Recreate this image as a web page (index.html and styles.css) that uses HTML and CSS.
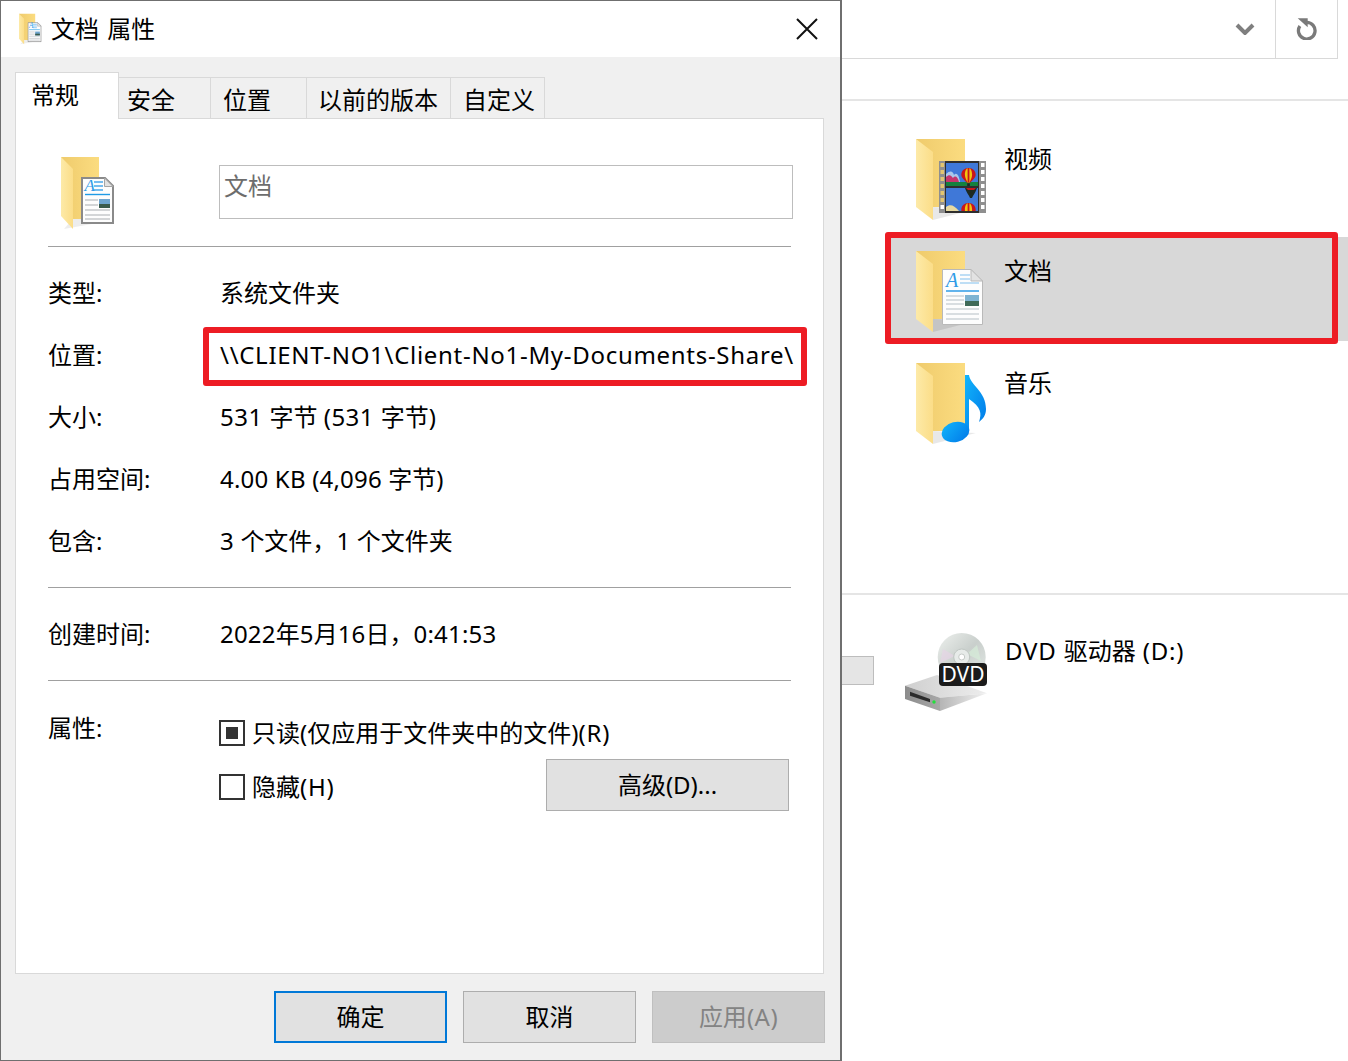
FILE: index.html
```html
<!DOCTYPE html>
<html lang="zh-CN">
<head>
<meta charset="utf-8">
<title>文档 属性</title>
<link rel="stylesheet" href="styles.css">
</head>
<body>
<svg class="defs" width="0" height="0" aria-hidden="true">
  <defs>
    <linearGradient id="flap" x1="0" x2="1" y1="0" y2="0"><stop offset="0" stop-color="#fdeaa8"/><stop offset="1" stop-color="#fbdd88"/></linearGradient>
    <linearGradient id="back" x1="0" x2="1" y1="0" y2="0"><stop offset="0" stop-color="#efcb6c"/><stop offset="1" stop-color="#fbdc80"/></linearGradient>
    <linearGradient id="note" x1="0" x2="1" y1="0" y2="1"><stop offset="0" stop-color="#12b5fb"/><stop offset="1" stop-color="#0078e8"/></linearGradient>
    <linearGradient id="disc" x1="0" x2="1" y1="0" y2="1"><stop offset="0" stop-color="#eef1ee"/><stop offset=".5" stop-color="#c9cfcc"/><stop offset="1" stop-color="#e4e9e6"/></linearGradient>
    <linearGradient id="driveTop" x1="0" x2="1" y1="0" y2="0"><stop offset="0" stop-color="#cfcfcf"/><stop offset="1" stop-color="#ededed"/></linearGradient>
    <linearGradient id="driveSide" x1="0" x2="1" y1="0" y2="0"><stop offset="0" stop-color="#b5b5b5"/><stop offset="1" stop-color="#f2f2f2"/></linearGradient>
    <linearGradient id="driveFront" x1="0" x2="1" y1="0" y2="0"><stop offset="0" stop-color="#8c8c8c"/><stop offset="1" stop-color="#a8a8a8"/></linearGradient>
    <clipPath id="frameBottom"><rect x="30" y="49" width="32" height="23"/></clipPath>
    <symbol id="folder" viewBox="0 0 70 82">
      <path d="M17 81L60 70L17 68Z" fill="#000" opacity=".09"/>
      <path d="M0 0H49V68H17Z" fill="url(#back)"/>
      <path d="M0 0L17 13V81L0 68Z" fill="url(#flap)"/>
    </symbol>
    <symbol id="doc" viewBox="0 0 41 56">
      <path d="M.5 .5H29L40.5 12V55.5H.5Z" fill="#fdfdfd" stroke="#b9b9b9"/>
      <path d="M29 .5V12H40.5Z" fill="#e2e2e2" stroke="#b9b9b9"/>
      <text class="doc-a" x="4" y="18">A</text>
      <path d="M18 6H28M18 10H28M18 14H37" stroke="#a9d3f2" stroke-width="1.5"/>
      <path d="M4 22H37" stroke="#2f9be6" stroke-width="1.5"/>
      <path d="M4 27H22M4 31H22M4 35H22M4 40H37M4 45H37M4 50H37" stroke="#cdd3d8" stroke-width="1.5"/>
      <rect x="23" y="26" width="14" height="11" fill="#7fb4d2"/>
      <rect x="23" y="32" width="14" height="5" fill="#3f6a58"/>
    </symbol>
    <symbol id="doc-small" viewBox="0 0 33 47">
      <path d="M1 1H24L32 9V46H1Z" fill="#fdfdfd" stroke="#8a8a8a" stroke-width="2"/>
      <path d="M23.5 1V9.5H32Z" fill="#e2e2e2" stroke="#a5a5a5"/>
      <text class="doc-a-small" x="3.5" y="14">A</text>
      <path d="M13 5H22M13 9H22M13 13H22" stroke="#4aa8ea" stroke-width="1.4"/>
      <path d="M4 17.5H29" stroke="#1f9be6" stroke-width="1.4"/>
      <path d="M4 23H17M4 28H17M4 33H29M4 38H29M4 42H29" stroke="#a9adb1" stroke-width="1.2"/>
      <rect x="18" y="22" width="11" height="9" fill="#6ea5cf"/>
      <rect x="18" y="27" width="11" height="4" fill="#3a5b4c"/>
    </symbol>
    <symbol id="balloon" viewBox="0 0 16 20">
      <path d="M8 0C13 0 16 3.5 16 7.5C16 11 12 14 10 16H6C4 14 0 11 0 7.5C0 3.5 3 0 8 0Z" fill="#c9161c"/>
      <path d="M8 0C10.5 0 12 3.5 12 7.5C12 11 10 14 9 16H7C6 14 4 11 4 7.5C4 3.5 5.500 0 8 0Z" fill="#f2c40f"/>
      <path d="M8 0V16" stroke="#c9161c" stroke-width="2"/>
      <rect x="6.500" y="17" width="3" height="3" fill="#222"/>
    </symbol>
    <symbol id="title-doc-folder" viewBox="0 0 54 74">
      <path d="M3 73L42 66L14 60Z" fill="#000" opacity=".07"/>
      <path d="M0 1H38V63H12Z" fill="url(#back)"/>
      <path d="M0 1L12 13V73L0 60Z" fill="url(#flap)"/>
      <use href="#doc-small" x="20" y="21" width="33" height="47"/>
    </symbol>
  </defs>
</svg>

<section class="dialog">
  <header class="titlebar">
    <svg class="title-icon"><use href="#title-doc-folder"/></svg>
    <h1 class="title">文档 属性</h1>
    <svg class="close" viewBox="0 0 22 22"><path d="M1 1L21 21M21 1L1 21" stroke="#111" stroke-width="2"/></svg>
  </header>

  <nav class="tabs">
    <div class="tab active w-general">常规</div>
    <div class="tab w-security">安全</div>
    <div class="tab w-location">位置</div>
    <div class="tab w-previous">以前的版本</div>
    <div class="tab w-custom">自定义</div>
  </nav>

  <main class="panel">
    <div class="head">
      <svg class="head-icon"><use href="#title-doc-folder"/></svg>
      <div class="name-field">文档</div>
    </div>
    <hr class="sep">
    <div class="rows">
      <div class="row"><span class="label">类型:</span><span>系统文件夹</span></div>
      <div class="row"><span class="label">位置:</span><span class="path">\\CLIENT-NO1\Client-No1-My-Documents-Share\</span><span class="mark mark-path"></span></div>
      <div class="row"><span class="label">大小:</span><span><span class="lat-mid">531 </span>字节 <span class="lat-mid">(531 </span>字节<span class="lat-mid">)</span></span></div>
      <div class="row"><span class="label">占用空间:</span><span><span class="lat">4.00 KB (4,096 </span>字节<span class="lat">)</span></span></div>
      <div class="row"><span class="label">包含:</span><span><span class="lat">3 </span>个文件，<span class="lat">1 </span>个文件夹</span></div>
    </div>
    <hr class="sep">
    <div class="rows">
      <div class="row"><span class="label">创建时间:</span><span><span class="lat">2022</span>年<span class="lat">5</span>月<span class="lat">16</span>日，<span class="lat">0:41:53</span></span></div>
    </div>
    <hr class="sep">
    <div class="attrs">
      <span class="label attr-label">属性:</span>
      <div class="attr-list">
        <div class="attr"><span class="check mixed"></span><span>只读(仅应用于文件夹中的文件)<span class="lat-wide">(R)</span></span></div>
        <div class="attr attr-second">
          <div class="attr-left"><span class="check"></span><span>隐藏<span class="lat-wide">(H)</span></span></div>
          <div class="btn btn-adv">高级(D)...</div>
        </div>
      </div>
    </div>
  </main>

  <footer class="actions">
    <div class="btn btn-foot primary">确定</div>
    <div class="btn btn-foot">取消</div>
    <div class="btn btn-foot disabled">应用<span class="lat-mid">(A)</span></div>
  </footer>
</section>

<section class="explorer">
  <div class="addr">
    <div class="addr-field">
      <svg class="chev" viewBox="0 0 20 12"><path d="M2 2L10 10L18 2" fill="none" stroke="#7f7f7f" stroke-width="4"/></svg>
    </div>
    <div class="addr-refresh">
      <svg class="refresh" viewBox="0 0 22 22"><path d="M10.700 4.400A8.300 8.300 0 1 1 3.900 8" fill="none" stroke="#7a7a7a" stroke-width="3.300"/><path d="M1.700 .3H11.700V9.300Z" fill="#7a7a7a"/></svg>
    </div>
  </div>
  <div class="strip"></div>

  <div class="items">
    <div class="item">
      <svg class="big-icon" viewBox="0 0 70 82">
        <use href="#folder" width="70" height="82"/>
        <rect x="23" y="22" width="47" height="52" fill="#8f8f8f"/>
        <rect x="24.500" y="24" width="3.500" height="4" fill="#e3c56f"/><rect x="24.500" y="31" width="3.500" height="4" fill="#e3c56f"/><rect x="24.500" y="38" width="3.500" height="4" fill="#e3c56f"/><rect x="24.500" y="45" width="3.500" height="4" fill="#e3c56f"/><rect x="24.500" y="52" width="3.500" height="4" fill="#e3c56f"/><rect x="24.500" y="59" width="3.500" height="4" fill="#e3c56f"/><rect x="24.500" y="66" width="3.500" height="4" fill="#fff"/>
        <rect x="65" y="24" width="3.500" height="4" fill="#fff"/><rect x="65" y="31" width="3.500" height="4" fill="#fff"/><rect x="65" y="38" width="3.500" height="4" fill="#fff"/><rect x="65" y="45" width="3.500" height="4" fill="#fff"/><rect x="65" y="52" width="3.500" height="4" fill="#fff"/><rect x="65" y="59" width="3.500" height="4" fill="#fff"/><rect x="65" y="66" width="3.500" height="4" fill="#fff"/>
        <rect x="29" y="22" width="34" height="52" fill="#2e2e2e"/>
        <rect x="30" y="24" width="32" height="23" fill="#3f78d8"/>
        <rect x="30" y="43" width="32" height="4" fill="#14803e"/>
        <path d="M30 43V35C34 31 37 32 38 36C40 33 43 35 44 43Z" fill="#a9c7ea"/>
        <path d="M30 43V38C33 35 35 36 37 39C39 36 42 38 43 43Z" fill="#c4356d"/>
        <use href="#balloon" x="45" y="29" width="15" height="18"/>
        <rect x="30" y="49" width="32" height="23" fill="#3f78d8"/>
        <path d="M49 49H61C60 53 57 56 56 59H54C53 56 50 53 49 49Z" fill="#1d2a22"/>
        <path d="M50 49H60L58 51H52Z" fill="#c9161c"/>
        <path d="M30 72V68C34 65 38 66 43 72Z" fill="#e7d9a0"/>
        <g clip-path="url(#frameBottom)"><use href="#balloon" x="45" y="64" width="15" height="18"/></g>
      </svg>
      <span class="item-name">视频</span>
    </div>
    <div class="item selected">
      <svg class="big-icon" viewBox="0 0 70 82">
        <use href="#folder" width="70" height="82"/>
        <use href="#doc" x="26" y="18" width="41" height="56"/>
      </svg>
      <span class="item-name">文档</span>
      <span class="mark mark-item"></span>
    </div>
    <div class="item">
      <svg class="big-icon" viewBox="0 0 70 82">
        <use href="#folder" width="70" height="82"/>
        <path d="M49 12H53C54 22 70 28 70 46C70 52 67 56 63 59C66 50 65 44 53 36V68H49Z" fill="url(#note)"/>
        <ellipse cx="39.500" cy="69" rx="14" ry="10" transform="rotate(-14 39.500 69)" fill="url(#note)"/>
      </svg>
      <span class="item-name">音乐</span>
    </div>
  </div>

  <div class="group-sep"></div>

  <div class="drive-row">
    <span class="stub"></span>
    <svg class="dvd-icon" viewBox="0 0 85 80">
      <circle cx="56.700" cy="24" r="24" fill="url(#disc)"/>
      <path d="M38 16L50 23L35 30Z" fill="#e6d4e6" opacity=".7"/>
      <path d="M72 12L62 21L76 28Z" fill="#d6ecd9" opacity=".7"/>
      <circle cx="56.700" cy="24" r="8" fill="#e7ebe9" stroke="#bfc6c2"/>
      <circle cx="56.700" cy="24" r="3" fill="#fff" stroke="#c5cac7"/>
      <path d="M0 52.700L32 42L82 60.300L35 64.700Z" fill="url(#driveTop)"/>
      <path d="M35 64.700L82 60.300L35 78Z" fill="url(#driveSide)"/>
      <path d="M0 52.700L35 64.700V78L0 66Z" fill="url(#driveFront)"/>
      <path d="M5 58.700L25 66V69.300L5 62.700Z" fill="#2b2b2b"/>
      <circle cx="29" cy="69" r="1.700" fill="#20e03a"/>
      <rect x="34" y="30" width="48" height="23" rx="4" fill="#1b1b1b"/>
      <text class="dvd-text" x="58" y="49">DVD</text>
    </svg>
    <span class="drive-name"><span class="lat-wide">DVD </span>驱动器<span class="lat-wide"> (D:)</span></span>
  </div>
</section>
</body>
</html>
```

FILE: styles.css
```css
* { box-sizing: border-box; }
html, body { margin: 0; height: 100%; }
body {
  display: flex;
  width: 1348px;
  height: 1061px;
  overflow: hidden;
  background: #fff;
  color: #000;
  font-family: "Noto Sans", "Noto Sans CJK SC", sans-serif;
  font-size: 24px;
  line-height: 32px;
}
.defs { position: absolute; }
.lat { letter-spacing: .2px; }
.lat-mid { letter-spacing: .5px; }
.lat-wide { letter-spacing: .8px; }
.path { letter-spacing: .7px; white-space: nowrap; }

/* dialog */
.dialog {
  flex: 0 0 842px;
  height: 1061px;
  display: flex;
  flex-direction: column;
  background: #f0f0f0;
  border: 1px solid #6f6f6f;
  border-right-width: 2px;
}
.titlebar {
  flex: 0 0 56px;
  display: flex;
  align-items: center;
  background: #fff;
  padding: 0 22px 0 18px;
}
.title-icon { width: 23px; height: 32px; margin-right: 9px; }
.title { flex: 1; margin: 0; font-size: 24px; font-weight: 400; word-spacing: 2px; }
.close { width: 22px; height: 22px; }

.tabs {
  display: flex;
  align-items: flex-end;
  height: 61px;
  padding-left: 14px;
}
.tab {
  height: 41px;
  background: #f0f0f0;
  border: 1px solid #d9d9d9;
  border-left: 0;
  border-bottom: 0;
  padding: 6px 0 0 12px;
}
.tab.active {
  height: 47px;
  background: #fff;
  border-left: 1px solid #d9d9d9;
  padding: 6px 0 0 15px;
  margin-bottom: -1px;
  position: relative;
  z-index: 1;
}
.w-general { width: 104px; }
.w-security { width: 92px; padding-left: 8px; }
.w-location { width: 96px; }
.w-previous { width: 144px; padding-left: 11px; }
.w-custom { width: 94px; }

.panel {
  width: 809px;
  height: 856px;
  margin-left: 14px;
  background: #fff;
  border: 1px solid #d9d9d9;
  padding: 38px 32px 0;
}
.head { display: flex; height: 74px; }
.head-icon { flex: none; width: 54px; height: 74px; margin: -1px 0 0 13px; }
.name-field {
  width: 574px;
  height: 54px;
  margin: 8px 0 0 104px;
  border: 1px solid #bdbdbd;
  padding: 4px 4px;
  color: #6d6d6d;
  flex: none;
}
.sep {
  width: 743px;
  height: 1px;
  margin: 15px 0;
  border: 0;
  background: #a0a0a0;
}
.rows { display: flex; flex-direction: column; }
.row { position: relative; display: flex; align-items: center; height: 62px; }
.label { flex: 0 0 172px; }

.mark { position: absolute; border: 6px solid #ed1c24; border-radius: 3px; pointer-events: none; }
.mark-path { left: 155px; right: -16px; top: 3px; height: 59px; }
.mark-item { left: -2px; right: 10px; top: -5px; bottom: -3px; }

.attrs { display: flex; }
.attr-label { padding-top: 16px; line-height: 32px; }
.attr-list { flex: 1; margin: 0 2px 0 -1px; padding-top: 10px; }
.attr { display: flex; align-items: center; height: 54px; }
.attr-second { justify-content: space-between; }
.attr-left { display: flex; align-items: center; }
.check {
  width: 26px;
  height: 26px;
  margin-right: 7px;
  border: 2px solid #333;
  background: #fff;
  display: flex;
  align-items: center;
  justify-content: center;
}
.mixed::after { content: ""; width: 12px; height: 12px; background: #333; }

.btn {
  display: flex;
  align-items: center;
  justify-content: center;
  background: #e1e1e1;
  border: 1px solid #adadad;
}
.btn-adv { width: 243px; height: 52px; margin-bottom: 4px; }
.actions {
  display: flex;
  gap: 16px;
  justify-content: flex-end;
  padding: 17px 15px 0 0;
}
.btn-foot { width: 173px; height: 52px; }
.primary { border: 2px solid #0078d7; }
.disabled { background: #cccccc; border-color: #bfbfbf; color: #838383; }

/* explorer */
.explorer { flex: 1; min-width: 0; display: flex; flex-direction: column; background: #fff; }
.addr { display: flex; height: 59px; width: 496px; flex: none; }
.addr-field {
  flex: 1;
  border-bottom: 1px solid #d9d9d9;
  display: flex;
  align-items: center;
  justify-content: flex-end;
  padding-right: 20px;
}
.chev { width: 20px; height: 12px; }
.addr-refresh {
  flex: 0 0 63px;
  border: 1px solid #d9d9d9;
  border-top: 0;
  display: flex;
  align-items: center;
  justify-content: center;
}
.refresh { width: 22px; height: 22px; }
.strip { flex: 0 0 42px; border-bottom: 2px solid #e5e5e5; }
.items { flex: 0 0 492px; display: flex; flex-direction: column; gap: 8px; padding-top: 24px; }
.item {
  position: relative;
  display: flex;
  margin-left: 45px;
  height: 104px;
  padding: 14px 0 0 29px;
}
.selected { background: #d8d8d8; }
.big-icon { width: 70px; height: 82px; flex: none; }
.item-name { margin: 4px 0 0 18px; }
.group-sep { flex: 0 0 2px; background: #e5e5e5; }
.drive-row { position: relative; display: flex; padding: 38px 0 0 63px; }
.stub {
  position: absolute;
  left: 0;
  top: 61px;
  width: 32px;
  height: 29px;
  background: #e5e5e5;
  border: 1px solid #bdbdbd;
  border-left: 0;
}
.dvd-icon { width: 85px; height: 80px; flex: none; }
.drive-name { margin: 2px 0 0 15px; }

.doc-a { font: italic 400 20px "Liberation Serif", serif; fill: #2f9be6; }
.doc-a-small { font: italic 400 17px "Liberation Serif", serif; fill: #2f9be6; }
.dvd-text { font: 400 21px "Noto Sans", sans-serif; fill: #fff; text-anchor: middle; }
```
